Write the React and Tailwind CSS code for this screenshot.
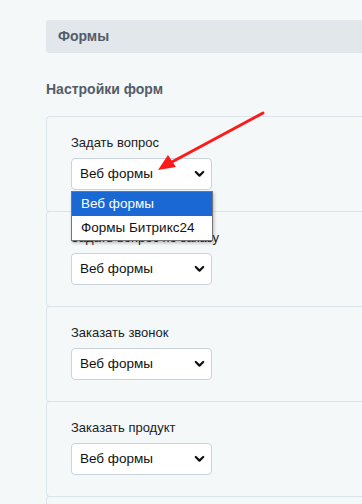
import React from "react";

const font = { fontFamily: '"Liberation Sans", Arial, sans-serif' };

function Chevron() {
  return (
    <svg width="11" height="8" viewBox="0 0 11 8" className="shrink-0">
      <polyline points="1.8,2 5.5,5.6 9.2,2" fill="none" stroke="#111" strokeWidth="2.2" strokeLinecap="round" strokeLinejoin="round" />
    </svg>
  );
}

function Select() {
  return (
    <div className="flex h-8 w-[141px] items-center justify-between rounded-[4px] border border-[#c9d3dc] bg-white pl-[8px] pr-[6px] text-[13.5px] text-[#111]">
      <span>Веб формы</span>
      <Chevron />
    </div>
  );
}

function Card({ label, children, first }) {
  return (
    <div className={`relative ${first ? "" : "-mt-px"} rounded-l-[4px] border border-r-0 border-[#dbe4eb] pl-6 pt-[17px] pb-[21px]`}>
      <div className="mb-[6px] h-[18px] text-[13px] leading-[18px] text-[#1b1b1b]">{label}</div>
      <Select />
      {children}
    </div>
  );
}

export default function App() {
  return (
    <div className="relative h-[504px] w-[362px] overflow-hidden bg-[#f5f8f9]" style={font}>
      <div className="pl-[46px] pt-5">
        <div className="flex h-[33px] items-center rounded-l-[3px] bg-[#e1e7ea] pl-3 text-[14px] font-bold text-[#535c69]">
          Формы
        </div>
        <div className="mt-[28px] h-[16px] text-[14px] font-bold leading-[16px] text-[#535c69]">Настройки форм</div>
        <div className="mt-[19px]">
          <Card label="Задать вопрос" first>
            <div className="absolute left-6 top-[74px] z-10 w-[142px] border border-[#767676] bg-white text-[13.5px] shadow-[1px_2px_3px_rgba(0,0,0,0.25)]">
              <div className="flex h-6 items-center bg-[#1a68d4] pl-[9px] text-white">Веб формы</div>
              <div className="flex h-6 items-center pl-[9px] text-[#111]">Формы Битрикс24</div>
            </div>
          </Card>
          <Card label="Задать вопрос по заказу" />
          <Card label="Заказать звонок" />
          <Card label="Заказать продукт" />
          <div className="-mt-px h-[40px] rounded-l-[4px] border border-r-0 border-[#dbe4eb]" />
        </div>
      </div>
      <svg className="absolute left-0 top-0 z-20" width="362" height="504" viewBox="0 0 362 504">
        <line x1="263" y1="113" x2="170" y2="163" stroke="#ff1a1a" strokeWidth="3" strokeLinecap="round" />
        <polygon points="158,170 168,155 176,167" fill="#ff1a1a" />
      </svg>
    </div>
  );
}
